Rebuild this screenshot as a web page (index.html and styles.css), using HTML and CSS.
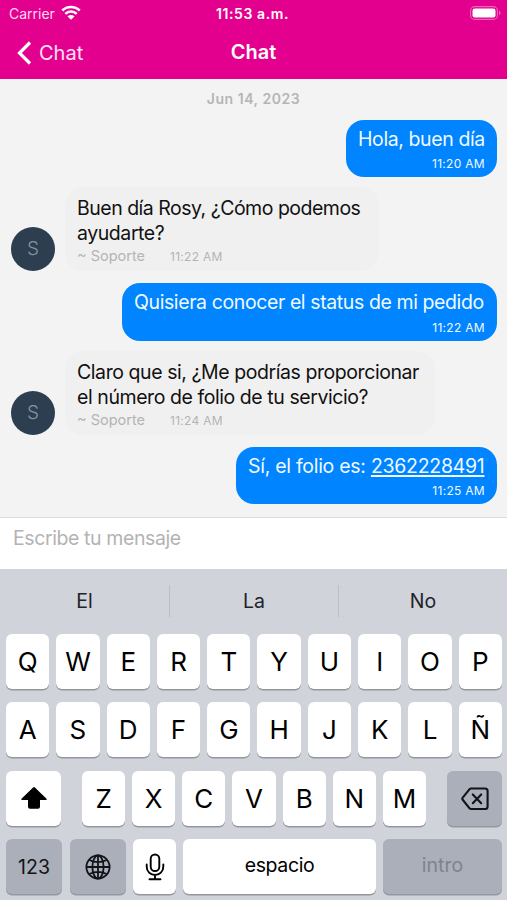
FILE: index.html
```html
<!DOCTYPE html>
<html lang="es">
<head>
<meta charset="utf-8">
<title>Chat</title>
<link rel="stylesheet" href="styles.css">
</head>
<body>
<div class="phone">
  <header class="top">
    <div class="status">
      <div class="carrier"><span>Carrier</span>
        <svg width="20" height="15" viewBox="0 0 20 15"><g fill="none" stroke="#fff" stroke-width="2.5"><path d="M1.3 5.5a12.4 12.4 0 0 1 17.4 0"/><path d="M4.3 8.9a8.2 8.2 0 0 1 11.4 0"/></g><path d="M6.5 11.4a5 5 0 0 1 7 0L10 14.8z" fill="#fff"/></svg>
      </div>
      <div class="clock">11:53 a.m.</div>
      <svg class="battery" width="31" height="14" viewBox="0 0 31 14"><rect x=".6" y=".6" width="26.8" height="12.8" rx="4" fill="none" stroke="#f062bb" stroke-width="1.1"/><rect x="2.5" y="2.5" width="23" height="9" rx="2.2" fill="#fff"/><path d="M29 4.8q1.6.8 1.6 2.2T29 9.2z" fill="#f062bb"/></svg>
    </div>
    <nav class="nav">
      <div class="back">
        <svg width="15" height="24" viewBox="0 0 15 24"><path d="M13 1.5 2.5 12 13 22.5" fill="none" stroke="#fff" stroke-width="3.2"/></svg>
        <span>Chat</span>
      </div>
      <h1>Chat</h1>
      <div></div>
    </nav>
  </header>

  <main class="messages">
    <div class="date">Jun 14, 2023</div>
    <div class="sent m1"><p>Hola, buen día</p><time>11:20 AM</time></div>
    <div class="received">
      <div class="avatar">S</div>
      <div class="bubble r1"><p><span class="l1">Buen día Rosy, ¿Cómo podemos</span><br><span>ayudarte?</span></p><div class="meta"><span>~ Soporte</span><time>11:22 AM</time></div></div>
    </div>
    <div class="sent m2"><p>Quisiera conocer el status de mi pedido</p><time>11:22 AM</time></div>
    <div class="received">
      <div class="avatar">S</div>
      <div class="bubble r2"><p><span>Claro que si, ¿Me podrías proporcionar</span><br><span>el número de folio de tu servicio?</span></p><div class="meta"><span>~ Soporte</span><time>11:24 AM</time></div></div>
    </div>
    <div class="sent m3"><p>Sí, el folio es: <u>2362228491</u></p><time>11:25 AM</time></div>
  </main>

  <div class="composer">Escribe tu mensaje</div>

  <section class="keyboard">
    <div class="suggestions"><span>El</span><span>La</span><span>No</span></div>
    <div class="row letters"><b>Q</b><b>W</b><b>E</b><b>R</b><b>T</b><b>Y</b><b>U</b><b>I</b><b>O</b><b>P</b></div>
    <div class="row letters"><b>A</b><b>S</b><b>D</b><b>F</b><b>G</b><b>H</b><b>J</b><b>K</b><b>L</b><b>Ñ</b></div>
    <div class="row third">
      <b><svg width="26" height="24" viewBox="0 0 26 24"><path d="M12.1 1.5q.9-.8 1.8 0L25.3 12.6q1 1.3-.6 1.5H19v6.700q0 2-2 2H9q-2 0-2-2v-6.700H1.300q-1.600-.2-.6-1.500z"/></svg></b>
      <div class="mid"><b>Z</b><b>X</b><b>C</b><b>V</b><b>B</b><b>N</b><b>M</b></div>
      <b class="gray"><svg class="delete" width="28" height="24" viewBox="0 0 28 24" fill="none" stroke="#111318" stroke-width="2.1" stroke-linecap="round" stroke-linejoin="round"><path d="M10.2 1.500H24q2.600 0 2.600 2.600v15.300q0 2.600-2.600 2.600H10.200q-1 0-1.800-.8L1.900 13q-1.200-1.300 0-2.600L8.400 2.300q.8-.8 1.800-.8z"/><path d="m11.800 7.400 8.400 8.800m0-8.800-8.400 8.800"/></svg></b>
    </div>
    <div class="row fourth">
      <b class="gray num">123</b>
      <b class="gray"><svg width="26" height="26" viewBox="0 0 26 26" fill="none" stroke="#111318" stroke-width="1.8"><circle cx="13" cy="13" r="11.6"/><ellipse cx="13" cy="13" rx="5.600" ry="11.600"/><path d="M13 1.400v23.200M1.400 13h23.200M4.300 6q8.700 4.400 17.400 0M4.300 20q8.700-4.400 17.400 0"/></svg></b>
      <b><svg width="20" height="28" viewBox="0 0 20 28" fill="none" stroke="#000" stroke-width="1.9" stroke-linecap="round"><rect x="5.700" y="1.500" width="8.600" height="16.500" rx="4.300"/><path d="M1.700 11.500v2.200a8.300 8.300 0 0 0 16.600 0v-2.200M10 22v4.200M4.500 26.200h11"/></svg></b>
      <b class="word">espacio</b>
      <b class="gray word enter">intro</b>
    </div>
  </section>
</div>
</body>
</html>
```
FILE: styles.css
```css
* { box-sizing: border-box; }
body { margin: 0; font-family: Inter, "Liberation Sans", sans-serif; background: #f3f3f3; }
p, h1 { margin: 0; }
svg { display: block; flex: none; }
.phone { width: 507px; height: 900px; display: flex; flex-direction: column; overflow: hidden; white-space: nowrap; }

.top { flex: none; height: 79px; background: #e3008f; color: #fff; }
.status { height: 27px; padding: 0 8px 0 9px; display: grid; grid-template-columns: 1fr auto 1fr; align-items: center; }
.carrier { display: flex; align-items: center; gap: 6px; font-size: 14px; color: #ffd9f2; }
.carrier span { width: 47px; }
.carrier svg { margin: -2px 0 0 -1px; }
.clock { font-size: 14px; font-weight: 600; letter-spacing: .6px; margin-left: -3px; }
.battery { justify-self: end; margin: -1px -2px 0 0; }
.nav { height: 51px; padding: 0 17px; display: grid; grid-template-columns: 1fr auto 1fr; align-items: center; }
.back { display: flex; align-items: center; gap: 7px; font-size: 20px; color: #ffe0f4; }
.nav h1 { font-size: 20px; font-weight: 600; line-height: 24px; margin-top: -1px; }

.messages { flex: none; height: 438px; padding: 10px 10px 0; display: flex; flex-direction: column; }
.date { flex: none; height: 31px; line-height: 20px; text-align: center; font-size: 14px; font-weight: 600; color: #b5b5b5; letter-spacing: .55px; }
.sent { flex: none; align-self: flex-end; height: 57px; padding: 7px 12px 0; border-radius: 18px; background: #0084ff; color: #effaff; display: flex; flex-direction: column; }
.sent p { font-size: 19.500px; line-height: 25px; letter-spacing: -.4px; }
.sent time { align-self: flex-end; margin-top: 4px; font-size: 12px; line-height: 16px; letter-spacing: .3px; }
.received { flex: none; display: flex; align-items: flex-end; gap: 10px; margin: 10px 0 12px; padding-left: 1px; }
.avatar { width: 44px; height: 44px; border-radius: 50%; background: #2c3e50; color: #8493a2; font-size: 19px; font-weight: 300; line-height: 44px; text-align: center; }
.bubble { height: 84px; padding: 9px 12px 0; border-radius: 18px; background: #f0f0f0; color: #111; }
.bubble p { font-size: 19.500px; line-height: 24.500px; letter-spacing: -.43px; }
.bubble .l1 { letter-spacing: -.5px; }
.meta { display: flex; gap: 25px; padding-top: 1px; color: #b4b4b4; font-size: 14.500px; line-height: 20px; }
.meta time { font-size: 12px; line-height: 22px; letter-spacing: .3px; }
.m1 { width: 151px; }
.m2 { width: 375px; height: 58px; }
.m2 time { margin-top: 5px; }
.m3 { width: 261px; }
.m3 p { letter-spacing: -.28px; }
.r1 { width: 314px; }
.r2 { width: 370px; }
u { text-decoration-thickness: 1.500px; text-underline-offset: 2px; }

.composer { flex: none; height: 52px; padding: 8px 13px; border-top: 1px solid #dcdcde; background: #fff; color: #b3b3b3; font-size: 19.500px; line-height: 25px; letter-spacing: -.4px; }

.keyboard { flex: none; height: 331px; background: #d0d3da; padding: 0 5px 0 6px; display: flex; flex-direction: column; }
.suggestions { flex: none; height: 64.500px; margin: 0 -5px 0 -6px; display: grid; grid-template-columns: repeat(3, 1fr); align-items: center; text-align: center; font-size: 19.500px; line-height: 32px; color: #202329; }
.suggestions span + span { border-left: 1px solid #bcbfc6; }
.row { flex: none; height: 55px; margin-bottom: 13.500px; display: grid; gap: 7px; }
.letters { grid-template-columns: repeat(10, 1fr); }
.row b { display: flex; align-items: center; justify-content: center; min-width: 0; height: 55px; border-radius: 6px; background: #fff; box-shadow: 0 1.500px 0 #94979d; font-size: 26px; font-weight: 400; color: #000; }
.third { grid-template-columns: 55px 344px 55px; justify-content: space-between; gap: 0; }
.mid { display: grid; grid-template-columns: repeat(7, 1fr); gap: 7px; }
.row .gray { background: #abafba; color: #111318; }
.delete { margin-top: 2px; }
.fourth { grid-template-columns: 57px 56px 43px 193px 1fr; column-gap: 7px; }
.row .num { margin-right: 1px; font-size: 19.500px; }
.row .word { font-size: 19.500px; padding-bottom: 3px; letter-spacing: -.4px; }
.row .enter { color: #7f838c; letter-spacing: 0; }
```
